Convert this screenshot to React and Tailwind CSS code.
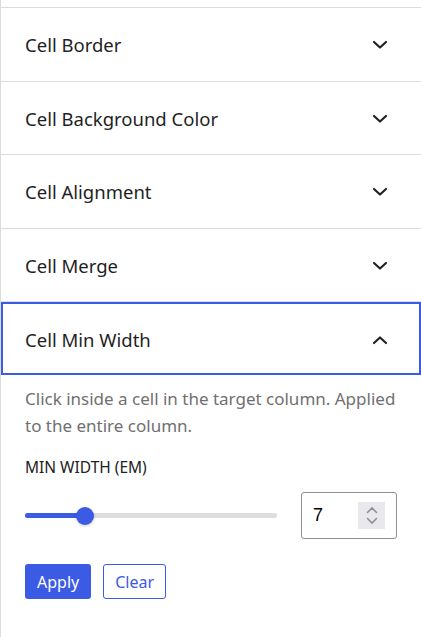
import { useState } from "react";

const sections = [
  "Cell Border",
  "Cell Background Color",
  "Cell Alignment",
  "Cell Merge",
];

function Chevron({ up = false }) {
  return (
    <svg width="16" height="10" viewBox="0 0 16 10" fill="none" className="shrink-0">
      <path
        d={up ? "M2 8 L8 2.5 L14 8" : "M2 2 L8 7.5 L14 2"}
        stroke="#222"
        strokeWidth="2.2"
        strokeLinecap="round"
        strokeLinejoin="round"
      />
    </svg>
  );
}

function Spinner() {
  return (
    <div className="w-[27px] h-[27px] bg-[#e9e9ed] flex flex-col items-center justify-center gap-[3px]">
      <svg width="12" height="8" viewBox="0 0 12 8" fill="none">
        <path d="M1.5 6.5 L6 2 L10.5 6.5" stroke="#8e8e96" strokeWidth="1.6" strokeLinecap="round" />
      </svg>
      <svg width="12" height="8" viewBox="0 0 12 8" fill="none">
        <path d="M1.5 1.5 L6 6 L10.5 1.5" stroke="#8e8e96" strokeWidth="1.6" strokeLinecap="round" />
      </svg>
    </div>
  );
}

export default function App() {
  const [minWidth, setMinWidth] = useState(7);
  const pct = 24; // thumb position on the track

  return (
    <div
      className="min-h-screen bg-white border-l border-[#dcdcdc] text-[#1f1f1f]"
      style={{ fontFamily: '"Noto Sans", "Open Sans", sans-serif' }}
    >
      <div className="h-[8px] border-b border-[#dcdcdc]" />

      {sections.map((title) => (
        <div
          key={title}
          className="h-[73.5px] border-b border-[#dcdcdc] flex items-center justify-between pt-[2px] pl-[24px] pr-[33px]"
        >
          <span className="text-[18.5px]">{title}</span>
          <Chevron />
        </div>
      ))}

      <div className="h-[73px] border-2 border-[#3b5be5] flex items-center justify-between pt-[2px] pl-[22px] pr-[31px]">
        <span className="text-[18.5px]">Cell Min Width</span>
        <Chevron up />
      </div>

      <div className="px-[24px] pt-[10px] pb-[40px]">
        <p className="text-[17px] leading-[27px] text-[#707070]">
          Click inside a cell in the target column. Applied to the entire column.
        </p>

        <div className="mt-[17px] text-[15.5px] uppercase text-[#222]">Min Width (em)</div>

        <div className="mt-[13px] flex items-center">
          <div className="relative w-[252px] h-[5px] rounded-full bg-[#dedede]">
            <div className="absolute left-0 top-0 h-full rounded-full bg-[#3b5be5]" style={{ width: `${pct}%` }} />
            <div
              className="absolute top-1/2 w-[18px] h-[18px] -translate-x-1/2 -translate-y-1/2 rounded-full bg-[#3b5be5] shadow-[0_1px_3px_rgba(0,0,0,0.2)]"
              style={{ left: `${pct}%` }}
            />
          </div>

          <div className="ml-[24px] w-[96px] h-[47px] border border-[#8f8f8f] rounded-[3px] flex items-center justify-between pl-[11px] pr-[11px]">
            <input
              value={minWidth}
              onChange={(e) => setMinWidth(e.target.value)}
              className="w-[30px] outline-none text-[18px] text-black bg-transparent"
              style={{ fontFamily: '"Liberation Sans", Arial, sans-serif' }}
            />
            <Spinner />
          </div>
        </div>

        <div className="mt-[25px] flex gap-[12px]">
          <button className="h-[35px] px-[12px] rounded-[3px] bg-[#3b5be5] text-white text-[16px]">
            Apply
          </button>
          <button className="h-[35px] px-[11px] rounded-[3px] border border-[#3b5be5] text-[#3b5be5] text-[16px] bg-white">
            Clear
          </button>
        </div>
      </div>
    </div>
  );
}
